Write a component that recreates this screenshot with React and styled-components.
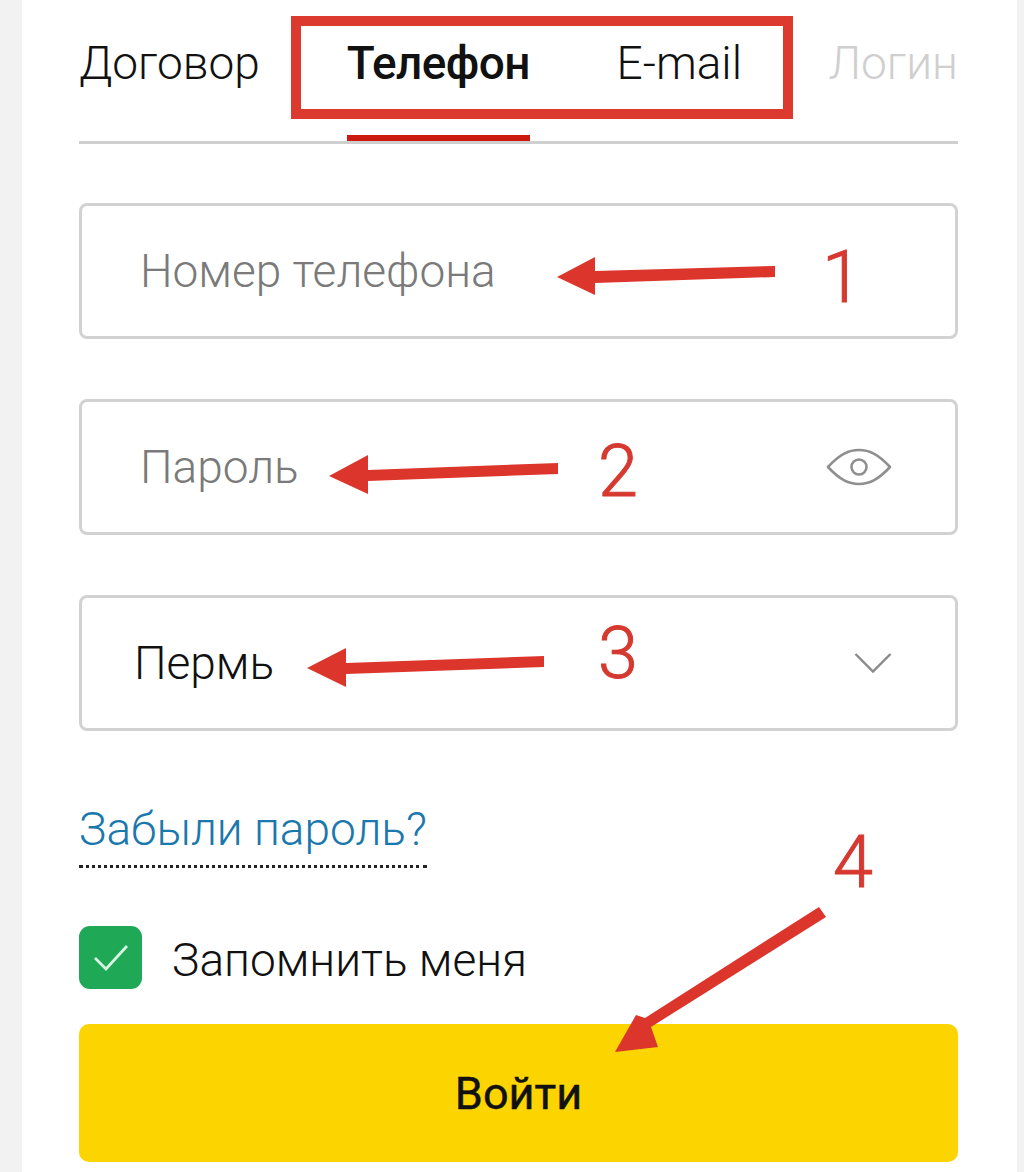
import React from "react";
import styled, { createGlobalStyle } from "styled-components";

const GlobalStyle = createGlobalStyle`
    html, body {
        margin: 0;
        padding: 0;
        background: #f2f2f2;
    }
    * {
        box-sizing: border-box;
    }
`;

export default function App() {
    return (
        <Page>
            <GlobalStyle />
            <Card>
                <Tabs>
                    <Tab>Договор</Tab>
                    <Tab $active>Телефон</Tab>
                    <Tab>E-mail</Tab>
                    <Tab $muted>Логин</Tab>
                </Tabs>

                <Form>
                    <Field>
                        <Placeholder>Номер телефона</Placeholder>
                    </Field>
                    <Field>
                        <Placeholder>Пароль</Placeholder>
                        <IconSlot>
                            <svg width="66" height="40" viewBox="0 0 66 40" fill="none" stroke="#8f8f8f" strokeWidth="2.6">
                                <path d="M2 20 C14 7 23 3 33 3 C43 3 52 7 64 20 C52 33 43 37 33 37 C23 37 14 33 2 20 Z" strokeLinejoin="round" />
                                <circle cx="33" cy="20" r="7.5" />
                            </svg>
                        </IconSlot>
                    </Field>
                    <Field $select>
                        <Value>Пермь</Value>
                        <IconSlot>
                            <svg width="38" height="22" viewBox="0 0 38 22" fill="none" stroke="#8a8a8a" strokeWidth="2.4">
                                <path d="M1.5 2 L19 19.5 L36.5 2" />
                            </svg>
                        </IconSlot>
                    </Field>
                </Form>

                <ForgotLink href="#">Забыли пароль?</ForgotLink>

                <RememberRow>
                    <CheckBox>
                        <svg width="36" height="28" viewBox="0 0 36 28" fill="none" stroke="#d8f3e0" strokeWidth="2.8">
                            <path d="M2 14 L13 25 L34 2" />
                        </svg>
                    </CheckBox>
                    <RememberLabel>Запомнить меня</RememberLabel>
                </RememberRow>

                <SubmitButton>Войти</SubmitButton>
            </Card>

            {/* пометки поверх скриншота */}
            <Frame />
            <Arrows viewBox="0 0 1024 1172">
                <polygon points="775,266 775,277 595,283 595,295 557,277 595,257 595,271" />
                <polygon points="558,463 558,474 368,481 368,494 329,476 368,455 368,470" />
                <polygon points="544,656 544,667 346,674 346,687 307,668 346,648 346,663" />
                <polygon points="819,907 826,917 651,1027 658,1047 615,1052 636,1015 645,1018" />
            </Arrows>
            <Mark $x={822} $y={236}>1</Mark>
            <Mark $x={598} $y={430}>2</Mark>
            <Mark $x={598} $y={612}>3</Mark>
            <Mark $x={833} $y={821}>4</Mark>
        </Page>
    );
}

const Page = styled.div`
    position: relative;
    width: 1024px;
    height: 1172px;
    overflow: hidden;
    padding: 0 7px 0 22px;
    font-family: Roboto, "Liberation Sans", sans-serif;
`;

const Card = styled.div`
    height: 100%;
    background: #ffffff;
    padding: 0 59px 0 57px;
    display: flex;
    flex-direction: column;
`;

const Tabs = styled.div`
    height: 144px;
    flex: none;
    display: flex;
    justify-content: space-between;
    border-bottom: 3px solid #cfcfcf;
    padding-top: 34px;
`;

const Tab = styled.div`
    position: relative;
    height: 107px;
    font-size: 46px;
    line-height: 58px;
    font-weight: ${(p) => (p.$active ? 500 : 300)};
    letter-spacing: ${(p) => (p.$active ? "-0.6px" : "0")};
    color: ${(p) => (p.$muted ? "#cfcfcf" : "#111111")};

    ${(p) =>
        p.$active &&
        `
        &::after {
            content: "";
            position: absolute;
            left: 0;
            right: 0;
            bottom: 0;
            height: 6px;
            background: #cc1a10;
        }
    `}
`;

const Form = styled.div`
    margin-top: 59px;
    display: flex;
    flex-direction: column;
    gap: 60px;
`;

const Field = styled.div`
    height: 136px;
    display: flex;
    align-items: center;
    justify-content: space-between;
    padding: 0 63px 0 ${(p) => (p.$select ? "52px" : "58px")};
    border: 3px solid #d2d2d2;
    border-radius: 8px;
    background: #ffffff;
`;

const Placeholder = styled.span`
    font-size: 46px;
    font-weight: 300;
    color: #7a7a7a;
`;

const Value = styled.span`
    font-size: 46px;
    font-weight: 300;
    color: #111111;
`;

const IconSlot = styled.span`
    display: flex;
    align-items: center;
`;

const ForgotLink = styled.a`
    align-self: flex-start;
    margin-top: 69px;
    font-size: 46px;
    line-height: 58px;
    font-weight: 300;
    color: #1a78ad;
    text-decoration: none;
    padding-bottom: 7px;
    border-bottom: 3px dotted #222222;
`;

const RememberRow = styled.div`
    margin-top: 58px;
    display: flex;
    align-items: center;
    gap: 30px;
`;

const CheckBox = styled.div`
    width: 63px;
    height: 63px;
    flex: none;
    display: flex;
    align-items: center;
    justify-content: center;
    background: #1fa855;
    border-radius: 11px;
`;

const RememberLabel = styled.span`
    padding-top: 4px;
    font-size: 46px;
    font-weight: 300;
    color: #111111;
`;

const SubmitButton = styled.button`
    margin-top: 35px;
    height: 138px;
    flex: none;
    border: 0;
    border-radius: 10px;
    background: #fcd500;
    font-family: inherit;
    font-size: 45px;
    font-weight: 400;
    color: #111111;
    -webkit-text-stroke: 0.5px #111111;
`;

const Frame = styled.div`
    position: absolute;
    left: 291px;
    top: 16px;
    width: 502px;
    height: 103px;
    border: 10px solid #dc3a2e;
`;

const Arrows = styled.svg`
    position: absolute;
    left: 0;
    top: 0;
    width: 1024px;
    height: 1172px;
    fill: #dc352c;
    pointer-events: none;
`;

const Mark = styled.span`
    position: absolute;
    left: ${(p) => p.$x}px;
    top: ${(p) => p.$y}px;
    font-size: 72px;
    line-height: 84px;
    font-weight: 300;
    color: #d5392f;
    -webkit-text-stroke: 1px #d5392f;
`;
